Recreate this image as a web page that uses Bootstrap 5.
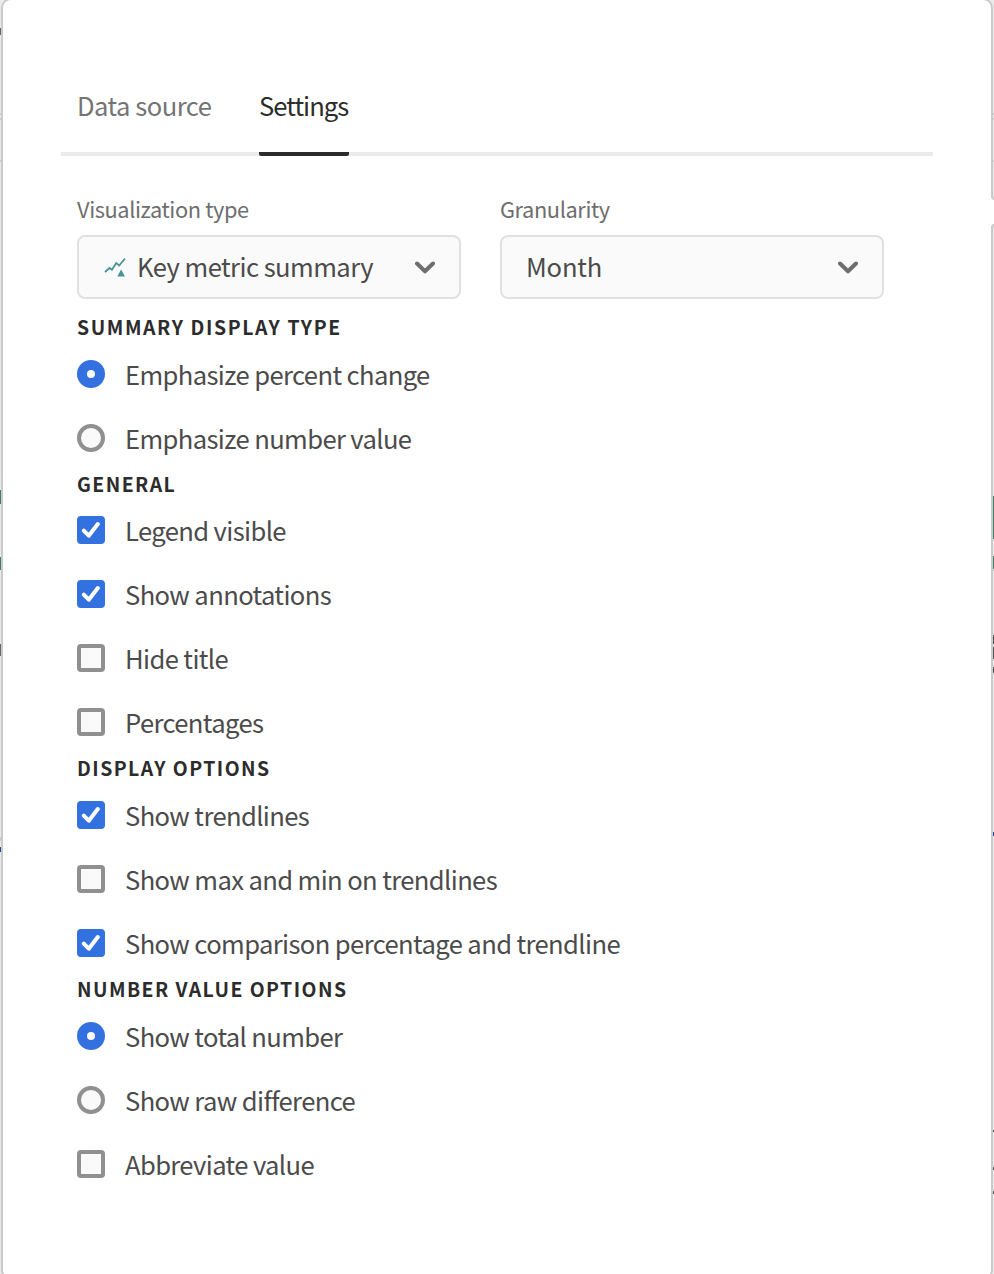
<!DOCTYPE html>
<html lang="en">
<head>
<meta charset="utf-8">
<meta name="viewport" content="width=device-width, initial-scale=1">
<title>Settings</title>
<link href="https://cdn.jsdelivr.net/npm/bootstrap@5.3.0/dist/css/bootstrap.min.css" rel="stylesheet">
<style>
  body { background: #eaeaea; color: #4b4b4b; font-family: "Noto Sans CJK SC", "Noto Sans", sans-serif; font-size: 25.6px; line-height: 32px; }
  .panel { width: 992px; height: 1282px; margin: -2px 0 0 1px; background: #fff; border: 2px solid #cacaca; border-radius: 10px; padding: 74px 58px 0; }
  .viewport { height: 1274px; }
  .tabs { height: 82px; border-bottom: 4px solid #eaeaea; padding-left: 16px; gap: 48px; }
  .tabs .nav-link { width: 134px; height: 82px; padding: 15px 0 0; color: #747474; line-height: 32px; letter-spacing: -.52px; white-space: nowrap; border-bottom: 4px solid transparent; }
  .tabs .nav-link.active { width: 90px; letter-spacing: -.95px; color: #2c2c2c; border-radius: 2px; background: linear-gradient(#2c2c2c, #2c2c2c) bottom / 100% 4px no-repeat border-box; }
  .options { padding: 41px 16px 0; }
  .pickers { gap: 39px; height: 117px; }
  .picker-field { width: 384px; }
  .picker-label { height: 38px; font-size: 21.8px; line-height: 24px; letter-spacing: -.4px; color: #6e6e6e; }
  .picker { width: 384px; height: 64px; padding: 0 24px 2px; background: #fafafa; border: 2px solid #e1e1e1; border-radius: 8px; color: #4b4b4b; letter-spacing: -.55px; }
  .picker .month { letter-spacing: -.2px; }
  .picker svg { position: relative; top: 1.5px; flex: none; }
  .heading { height: 29px; margin: 0; font-size: 19.4px; font-weight: 700; line-height: 28px; letter-spacing: 1.46px; color: #2c2c2c; }
  .short { height: 28px; }
  .first { line-height: 26px; letter-spacing: 1.6px; }
  .option { height: 64px; min-height: 0; margin: 0; padding: 0; gap: 20px; }
  .option .form-check-input { flex: none; width: 28px; height: 28px; margin: 0; border: 4px solid #909090; background-color: #fafafa; }
  .option .form-check-input[type=checkbox] { border-radius: 4px; }
  .option .form-check-input:checked { border-color: #3471e0; background-color: #3471e0; background-origin: border-box; background-size: 28px 28px; }
  .option .form-check-input:checked[type=checkbox] { background-image: url("data:image/svg+xml,%3csvg xmlns='http://www.w3.org/2000/svg' viewBox='0 0 28 28'%3e%3cpath d='M6.8 14.6l5 5.1L20.8 8' fill='none' stroke='%23fff' stroke-width='4' stroke-linecap='round' stroke-linejoin='round'/%3e%3c/svg%3e"); }
  .option .form-check-input:checked[type=radio] { background-image: url("data:image/svg+xml,%3csvg xmlns='http://www.w3.org/2000/svg' viewBox='0 0 28 28'%3e%3ccircle cx='14' cy='14' r='4' fill='%23fafafa'/%3e%3c/svg%3e"); }
  .option label { white-space: nowrap; letter-spacing: -.62px; }
  .edge { top: 0; pointer-events: none; }
</style>
</head>
<body>
<div class="viewport position-relative overflow-hidden">
  <main class="panel">
    <nav class="nav tabs flex-nowrap">
      <a class="nav-link" href="#"><span>Data source</span></a>
      <a class="nav-link active" href="#"><span>Settings</span></a>
    </nav>
    <form class="options">
      <div class="pickers d-flex">
        <div class="picker-field">
          <div class="picker-label"><span>Visualization type</span></div>
          <button type="button" class="picker d-flex align-items-center">
            <svg class="me-2" width="26" height="24" viewBox="0 0 26 24" fill="none"><path d="M2 16l4.5-4 2.5 1.8L13.2 7l3 2.5L22 2.5" stroke="#47959a" stroke-width="1.8"/><path d="M14.3 20.5l3.8-7 3.9 7z" fill="#47959a"/></svg>
            <span>Key metric summary</span>
            <svg class="ms-auto" width="20" height="14" viewBox="0 0 20 14"><path d="M2 2.5l8 7.8 8-7.8" fill="none" stroke="#6e6e6e" stroke-width="4" stroke-linecap="round" stroke-linejoin="round"/></svg>
          </button>
        </div>
        <div class="picker-field">
          <div class="picker-label"><span>Granularity</span></div>
          <button type="button" class="picker d-flex align-items-center">
            <span class="month">Month</span>
            <svg class="ms-auto" width="20" height="14" viewBox="0 0 20 14"><path d="M2 2.5l8 7.8 8-7.8" fill="none" stroke="#6e6e6e" stroke-width="4" stroke-linecap="round" stroke-linejoin="round"/></svg>
          </button>
        </div>
      </div>

      <h2 class="heading short first"><span>SUMMARY DISPLAY TYPE</span></h2>
      <div class="form-check option d-flex align-items-center"><input class="form-check-input" type="radio" name="emphasis" id="o1" checked><label for="o1">Emphasize percent change</label></div>
      <div class="form-check option d-flex align-items-center"><input class="form-check-input" type="radio" name="emphasis" id="o2"><label for="o2">Emphasize number value</label></div>

      <h2 class="heading short"><span>GENERAL</span></h2>
      <div class="form-check option d-flex align-items-center"><input class="form-check-input" type="checkbox" id="o3" checked><label for="o3">Legend visible</label></div>
      <div class="form-check option d-flex align-items-center"><input class="form-check-input" type="checkbox" id="o4" checked><label for="o4">Show annotations</label></div>
      <div class="form-check option d-flex align-items-center"><input class="form-check-input" type="checkbox" id="o5"><label for="o5">Hide title</label></div>
      <div class="form-check option d-flex align-items-center"><input class="form-check-input" type="checkbox" id="o6"><label for="o6">Percentages</label></div>

      <h2 class="heading"><span>DISPLAY OPTIONS</span></h2>
      <div class="form-check option d-flex align-items-center"><input class="form-check-input" type="checkbox" id="o7" checked><label for="o7">Show trendlines</label></div>
      <div class="form-check option d-flex align-items-center"><input class="form-check-input" type="checkbox" id="o8"><label for="o8">Show max and min on trendlines</label></div>
      <div class="form-check option d-flex align-items-center"><input class="form-check-input" type="checkbox" id="o9" checked><label for="o9">Show comparison percentage and trendline</label></div>

      <h2 class="heading"><span>NUMBER VALUE OPTIONS</span></h2>
      <div class="form-check option d-flex align-items-center"><input class="form-check-input" type="radio" name="number" id="o10" checked><label for="o10">Show total number</label></div>
      <div class="form-check option d-flex align-items-center"><input class="form-check-input" type="radio" name="number" id="o11"><label for="o11">Show raw difference</label></div>
      <div class="form-check option d-flex align-items-center"><input class="form-check-input" type="checkbox" id="o12"><label for="o12">Abbreviate value</label></div>
    </form>
  </main>

  <!-- slivers of the page behind the panel -->
  <svg class="edge position-absolute start-0" width="1" height="1274">
    <path d="M0 28h1v7H0zM0 644h1v12H0z" fill="#666"/>
    <path d="M0 113h1v2H0zM0 118h1v2H0zM0 160h1v2H0zM0 837h1v4H0z" fill="#ccc"/>
    <path d="M0 490h1v14H0zM0 557h1v13H0z" fill="#3f7d66"/>
    <path d="M0 847h1v5H0z" fill="#26489b"/>
  </svg>
  <svg class="edge position-absolute end-0" width="3" height="1274">
    <path d="M0 198h3v28H0z" fill="#fff"/>
    <path d="M0 196h2l1 3v1H2l-2-3zM0 228v-2l2-2h1v2l-1 2z" fill="#cacaca"/>
    <path d="M2 113h1v2H2zM2 118h1v2H2zM2 160h1v2H2z" fill="#ccc"/>
    <path d="M2 496h1v43H2zM2 556h1v13H2z" fill="#3f7d66"/>
    <path d="M2 635h1v9H2zM2 647h1v12H2zM2 667h1v6H2zM2 1130h1v2H2zM2 1167h1v3H2zM2 1191h1v3H2z" fill="#555"/>
    <path d="M2 832h1v4H2z" fill="#26489b"/>
  </svg>
</div>
<script src="https://cdn.jsdelivr.net/npm/bootstrap@5.3.0/dist/js/bootstrap.bundle.min.js"></script>
</body>
</html>
